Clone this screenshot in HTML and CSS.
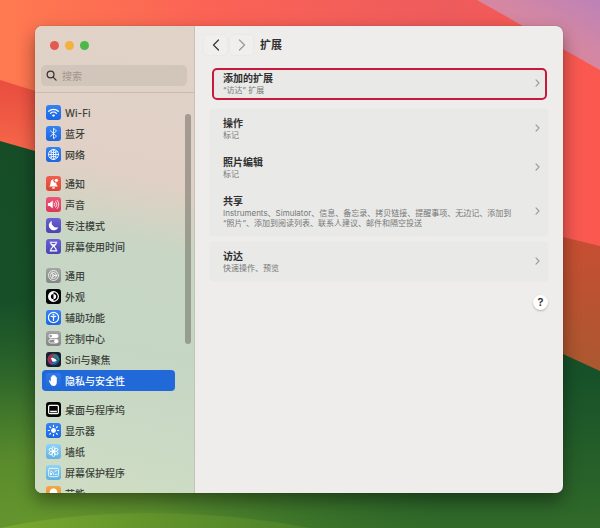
FILE: index.html
```html
<!DOCTYPE html>
<html lang="zh-CN">
<head>
<meta charset="utf-8">
<meta name="viewport" content="width=device-width, initial-scale=1">
<title>扩展</title>
<link rel="stylesheet" href="styles.css">
</head>
<body>
<svg class="wallpaper" viewBox="0 0 600 528" preserveAspectRatio="none" aria-hidden="true">
  <defs>
    <linearGradient id="sky" x1="0" y1="0" x2="1" y2="0"><stop offset="0" stop-color="#ff7a50"/><stop offset=".35" stop-color="#fa6355"/><stop offset=".75" stop-color="#ee5b5c"/><stop offset="1" stop-color="#fb584f"/></linearGradient>
    <linearGradient id="lilac" x1="0" y1="1" x2="1" y2="0"><stop offset="0" stop-color="#dc8599"/><stop offset=".6" stop-color="#d487a3"/><stop offset="1" stop-color="#bd82b8"/></linearGradient>
    <linearGradient id="leftBand" x1="0" y1="0" x2="0" y2="1"><stop offset="0" stop-color="#e94d3f"/><stop offset="1" stop-color="#fb704e"/></linearGradient>
    <linearGradient id="rightBand" x1="0" y1="0" x2="0" y2="1"><stop offset="0" stop-color="#cc4c33"/><stop offset="1" stop-color="#a9592f"/></linearGradient>
    <linearGradient id="leaf" x1="0" y1="0" x2="0" y2="1"><stop offset="0" stop-color="#164d27"/><stop offset=".6" stop-color="#175129"/><stop offset="1" stop-color="#316a29"/></linearGradient>
    <radialGradient id="glow" gradientUnits="userSpaceOnUse" cx="0" cy="0" r="1" gradientTransform="translate(40 528) scale(400 230)"><stop offset="0" stop-color="#65962d"/><stop offset=".3" stop-color="#5f902d" stop-opacity=".9"/><stop offset="1" stop-color="#3f782a" stop-opacity="0"/></radialGradient>
    <linearGradient id="hill" x1="0" y1="0" x2="1" y2="0"><stop offset="0" stop-color="#79a82f"/><stop offset="1" stop-color="#4c8029"/></linearGradient>
  </defs>
  <rect width="600" height="528" fill="url(#sky)"/>
  <path d="M477 0H600V70L563 49Q520 24 477 0Z" fill="url(#lilac)"/>
  <path d="M0 80L100 111V180L0 141Z" fill="url(#leftBand)"/>
  <path d="M480 215L563 237L600 246V380L480 330Z" fill="url(#rightBand)"/>
  <path d="M0 141L35 151L300 230L563 354L600 371V528H0Z" fill="url(#leaf)"/>
  <path d="M0 141L35 151L300 230L563 354L600 371V528H0Z" fill="url(#glow)"/>
  <path d="M0 528Q70 513 150 513T310 528Z" fill="url(#hill)"/>
</svg>

<main class="window">
  <aside class="sidebar">
    <div class="sidebar-top">
      <div class="lights">
        <button class="light close" aria-label="关闭"></button>
        <button class="light minimize" aria-label="最小化"></button>
        <button class="light zoom" aria-label="缩放"></button>
      </div>
      <label class="search">
        <svg viewBox="0 0 12 12" aria-hidden="true"><circle cx="5" cy="5" r="3.7"/><path d="M7.8 7.8L11 11"/></svg>
        <input type="search" placeholder="搜索" aria-label="搜索">
      </label>
    </div>
    <nav class="nav">
      <div class="group">
        <a href="#"><svg class="icon blue" viewBox="0 0 20 20"><g class="line thick"><path d="M3.6 8.4a9.2 9.2 0 0 1 12.8 0M6 11.2a5.8 5.8 0 0 1 8 0"/></g><path d="M10 16l-2.2-2.4a3.2 3.2 0 0 1 4.4 0z"/></svg>Wi-Fi</a>
        <a href="#"><svg class="icon blue" viewBox="0 0 20 20"><path class="line" d="M6 6.5l8 7L10 17V3l4 3.5-8 7"/></svg>蓝牙</a>
        <a href="#"><svg class="icon blue" viewBox="0 0 20 20"><g class="line"><circle cx="10" cy="10" r="6.7"/><ellipse cx="10" cy="10" rx="3.2" ry="6.7"/><path d="M3.3 10h13.4M10 3.3v13.4M4.7 6.3q5.3 3 10.6 0M4.7 13.7q5.3-3 10.6 0"/></g></svg>网络</a>
      </div>
      <div class="group">
        <a href="#"><svg class="icon red" viewBox="0 0 20 20"><path d="M4 14c2-1.700 1.800-3.200 2.100-5.500C6.400 6 8 4.300 10.200 4.200a3 3 0 0 0 3.400 4.600c.3 2.400.4 3.700 2.400 5.200zM8 15h4a2 2 0 0 1-4 0z"/><circle cx="13.800" cy="5.800" r="2.200"/></svg>通知</a>
        <a href="#"><svg class="icon pink" viewBox="0 0 20 20"><path d="M2.500 8h2.600L9 4.700v10.600L5.100 12H2.500z"/><g class="line"><path d="M11 8a3 3 0 0 1 0 4M13 6.300a5.500 5.500 0 0 1 0 7.400M15 4.600a8 8 0 0 1 0 10.800"/></g></svg>声音</a>
        <a href="#"><svg class="icon violet" viewBox="0 0 20 20"><path d="M8 3.600a6.600 6.600 0 1 0 8.500 8.700A6.700 6.700 0 0 1 8 3.600z"/></svg>专注模式</a>
        <a href="#"><svg class="icon violet" viewBox="0 0 20 20"><path d="M5 3.500h10v1.600H5zM5 15h10v1.600H5z"/><path class="line thick" d="M6.600 5v1.500L9.400 10l-2.800 3.500V15M13.400 5v1.500L10.600 10l2.800 3.500V15"/><path d="M7.500 7h5L10 10z"/></svg>屏幕使用时间</a>
      </div>
      <div class="group">
        <a href="#"><svg class="icon gray" viewBox="0 0 20 20"><g class="line"><circle cx="10" cy="10" r="6.600"/><circle cx="10" cy="10" r="4"/><circle cx="10" cy="10" r="1.200"/><path d="M11.200 10H14M9.400 9L8 6.500M9.400 11L8 13.500"/></g></svg>通用</a>
        <a href="#"><svg class="icon black" viewBox="0 0 20 20"><circle class="line thick" cx="10" cy="10" r="6.500"/><path d="M10 3.500a6.500 6.500 0 0 0 0 13v-3a3.500 3.500 0 0 1 0-7zM10 6.500a3.500 3.500 0 0 1 0 7z"/></svg>外观</a>
        <a href="#"><svg class="icon blue" viewBox="0 0 20 20"><circle class="line thick" cx="10" cy="10" r="6.800"/><circle cx="10" cy="6.300" r="1.400"/><path class="line thick" d="M7 8.500l3 .5 3-.5M10 9v5"/></svg>辅助功能</a>
        <a href="#"><svg class="icon gray" viewBox="0 0 20 20"><rect x="3.300" y="4" width="13.400" height="5.400" rx="2.700"/><circle cx="6.200" cy="6.700" r="1.700" fill="#939795"/><rect class="line" x="3.800" y="11" width="12.400" height="5" rx="2.500"/><circle cx="13.500" cy="13.500" r="2.500"/></svg>控制中心</a>
        <a href="#"><svg class="icon siri" viewBox="0 0 20 20"><circle cx="10" cy="10" r="8" fill="#274b78"/><path d="M2.500 8a8 8 0 0 1 12-4.500Q7 7 7.500 17A8 8 0 0 1 2.500 8z" fill="#a52d58"/><path d="M11 3a7 7 0 0 1 6.500 9Q13 7 7 7z" fill="#2b7f7c"/><path d="M6 15q5-1 10-4a7 7 0 0 1-10 4z" fill="#3378d2"/><path d="M6.500 8q4-1.500 8 3-3 3-6 1.500z"/></svg>Siri与聚焦</a>
        <a href="#" class="selected" aria-current="page"><svg class="icon blue" viewBox="0 0 20 20"><path d="M7 16.200C5.500 14.500 4.600 12 3.800 10c.7-.9 1.500-.3 2.600 1.400V5.300c0-1 1.400-1 1.500 0V3.800c.1-1 1.500-1 1.600 0v-.5c.1-1 1.600-1 1.700 0V4c.2-.9 1.600-.8 1.700.3v1.500c.3-.8 1.500-.6 1.500.4v6.100c0 2.800-1.500 4.900-4.200 4.900-1.300 0-2.400-.3-3.200-1z"/></svg>隐私与安全性</a>
      </div>
      <div class="group">
        <a href="#"><svg class="icon black" viewBox="0 0 20 20"><rect class="line thick" x="3.500" y="4.500" width="13" height="11" rx="1.500"/><path d="M5.500 11.500h9v2.300h-9z"/></svg>桌面与程序坞</a>
        <a href="#"><svg class="icon blue" viewBox="0 0 20 20"><circle cx="10" cy="10" r="3.200"/><path class="line thick" d="M10 3v1.500M10 15.500V17M3 10h1.500M15.500 10H17M5 5l1.100 1.100M13.900 13.900L15 15M5 15l1.100-1.100M13.900 6.100L15 5"/></svg>显示器</a>
        <a href="#"><svg class="icon sky" viewBox="0 0 20 20"><g class="line"><ellipse cx="10" cy="6.300" rx="2" ry="3"/><ellipse cx="10" cy="13.700" rx="2" ry="3"/><g transform="rotate(60 10 10)"><ellipse cx="10" cy="6.300" rx="2" ry="3"/><ellipse cx="10" cy="13.700" rx="2" ry="3"/></g><g transform="rotate(120 10 10)"><ellipse cx="10" cy="6.300" rx="2" ry="3"/><ellipse cx="10" cy="13.700" rx="2" ry="3"/></g></g><circle cx="10" cy="10" r="1.800"/></svg>墙纸</a>
        <a href="#"><svg class="icon sky" viewBox="0 0 20 20"><rect class="line" x="3.500" y="4.500" width="13" height="11" rx="1.500"/><path class="line" d="M6 13v-2.500M6 8q4 0 4.500 5M12 8.500l2-1M12.500 12.500h2"/><circle cx="7" cy="12" r="1.300"/></svg>屏幕保护程序</a>
        <a href="#"><svg class="icon orange" viewBox="0 0 20 20"><path d="M10 3a5 5 0 0 1 3 9q-.8.700-.8 2H7.800q0-1.300-.8-2a5 5 0 0 1 3-9zM8 15h4v1.500H8z"/></svg>节能</a>
      </div>
    </nav>
    <div class="scrollbar"></div>
  </aside>

  <section class="content">
    <header class="toolbar">
      <button class="nav-button" aria-label="返回"><svg viewBox="0 0 8 12"><path d="M6.500 1L1.500 6l5 5"/></svg></button>
      <button class="nav-button forward" aria-label="前进"><svg viewBox="0 0 8 12"><path d="M1.500 1l5 5-5 5"/></svg></button>
      <h1>扩展</h1>
    </header>
    <div class="cards">
      <div class="card highlighted">
        <button class="row"><span class="text"><strong>添加的扩展</strong><small>“访达” 扩展</small></span><svg class="chevron" viewBox="0 0 5 8"><path d="M1 .8L4 4 1 7.200"/></svg></button>
      </div>
      <div class="card">
        <button class="row"><span class="text"><strong>操作</strong><small>标记</small></span><svg class="chevron" viewBox="0 0 5 8"><path d="M1 .8L4 4 1 7.200"/></svg></button>
        <button class="row"><span class="text"><strong>照片编辑</strong><small>标记</small></span><svg class="chevron" viewBox="0 0 5 8"><path d="M1 .8L4 4 1 7.200"/></svg></button>
        <button class="row"><span class="text"><strong>共享</strong><small>Instruments、Simulator、信息、备忘录、拷贝链接、提醒事项、无边记、添加到<br>“照片”、添加到阅读列表、联系人建议、邮件和隔空投送</small></span><svg class="chevron" viewBox="0 0 5 8"><path d="M1 .8L4 4 1 7.200"/></svg></button>
      </div>
      <div class="card">
        <button class="row"><span class="text"><strong>访达</strong><small>快速操作、预览</small></span><svg class="chevron" viewBox="0 0 5 8"><path d="M1 .8L4 4 1 7.200"/></svg></button>
      </div>
    </div>
    <button class="help" aria-label="帮助">?</button>
  </section>
</main>
</body>
</html>
```
FILE: styles.css
```css
* {
  box-sizing: border-box;
}

body {
  margin: 0;
  height: 100vh;
  padding: 26px 37px 35px 35px;
  overflow: hidden;
  background: #17512a;
  font-family: Inter, "Noto Sans CJK SC", sans-serif;
  font-size: 10px;
  color: #303030;
}

button {
  margin: 0;
  padding: 0;
  border: 0;
  background: none;
  font: inherit;
  color: inherit;
}

.wallpaper {
  position: absolute;
  inset: 0;
  width: 100%;
  height: 100%;
}

.window {
  position: relative;
  display: grid;
  grid-template-columns: 160px 1fr;
  height: 100%;
  border-radius: 7px;
  overflow: hidden;
  background: #eeedec;
  box-shadow: 0 0 1px rgba(0, 0, 0, 0.4), 0 8px 18px rgba(0, 0, 0, 0.4);
}

/* Sidebar */

.sidebar {
  position: relative;
  display: flex;
  flex-direction: column;
  min-height: 0;
  overflow: hidden;
  border-right: 1px solid #c6c3b6;
  background: linear-gradient(192deg, #e0d3c8 0%, #e1d0c5 32%, #d5d3c3 39%, #c7d6c5 47%, #c6d6c5 68%, #cfddc3 100%);
}

.sidebar-top {
  padding: 15px 7px 6px 6px;
  border-bottom: 1px solid #cbbcb2;
}

.lights {
  display: flex;
  gap: 6px;
  padding-left: 9px;
}

.light {
  width: 9px;
  height: 9px;
  border-radius: 50%;
}

.close { background: #e35a52; }
.minimize { background: #f3b13f; }
.zoom { background: #4cb848; }

.search {
  display: flex;
  align-items: center;
  gap: 5px;
  height: 21px;
  margin-top: 15px;
  padding: 0 5px;
  border-radius: 5px;
  background: #d2c5ba;
}

.search svg {
  flex: none;
  width: 11px;
  height: 11px;
  fill: none;
  stroke: #3b3530;
  stroke-width: 1.4;
  stroke-linecap: round;
}

.search input {
  width: 100%;
  min-width: 0;
  padding: 0;
  border: 0;
  outline: 0;
  background: none;
  font: inherit;
}

.search input::placeholder {
  color: #a2968c;
}

.nav {
  flex: 1;
  min-height: 0;
  overflow: hidden;
  padding: 9px 19px 0 7px;
}

.group + .group {
  margin-top: 8px;
}

.group a {
  display: flex;
  align-items: center;
  gap: 4px;
  height: 21px;
  padding-left: 4px;
  border-radius: 4px;
  color: #3c433c;
  font-weight: 500;
  text-decoration: none;
}

.group a.selected {
  background: #2169d9;
  color: #fff;
}

.icon {
  flex: none;
  width: 15px;
  height: 15px;
  border-radius: 3px;
  fill: #fff;
}

.icon .line {
  fill: none;
  stroke: #fff;
  stroke-width: 1.1;
  stroke-linecap: round;
  stroke-linejoin: round;
}

.icon .thick {
  stroke-width: 1.6;
}

.blue { background: linear-gradient(#3582f3, #1b66e2); }
.red { background: linear-gradient(#f0604f, #db4434); }
.pink { background: linear-gradient(#f0557a, #db3759); }
.violet { background: linear-gradient(#6a62d4, #4b43b4); }
.gray { background: linear-gradient(#a3a6a3, #828684); }
.black { background: #050606; }
.siri { background: #15202c; }
.sky { background: linear-gradient(#91d3f5, #5fb1e3); }
.orange { background: linear-gradient(#f3a64b, #e98b26); }

.selected .blue {
  background: linear-gradient(#3179ea, #2169d9);
}

.scrollbar {
  position: absolute;
  top: 88px;
  right: 3px;
  width: 6px;
  height: 230px;
  border-radius: 3px;
  background: rgba(90, 90, 80, 0.45);
}

/* Content pane */

.content {
  display: flex;
  flex-direction: column;
  min-width: 0;
  padding: 9px 15px 15px;
}

.toolbar {
  display: flex;
  align-items: center;
  gap: 3px;
  height: 20px;
  margin-left: -6px;
}

.nav-button {
  display: grid;
  place-items: center;
  width: 23px;
  height: 20px;
  border-radius: 4px;
  background: #f0efee;
  box-shadow: 0 0 1px 1px #e9e8e7;
}

.nav-button svg {
  width: 8px;
  height: 12px;
  fill: none;
  stroke: #3a3a3a;
  stroke-width: 1.3;
  stroke-linecap: round;
  stroke-linejoin: round;
}

.nav-button.forward svg {
  stroke: #9b9b9b;
}

.toolbar h1 {
  margin: 0 0 0 4px;
  font-size: 11px;
  line-height: 20px;
  font-weight: 700;
}

.cards {
  display: grid;
  gap: 6px;
  margin-top: 13px;
}

.card {
  border-radius: 4px;
  background: #e9e9e8;
  box-shadow: 0 0 1px #dededd;
}

.card.highlighted {
  margin: 0 1px 3px 2px;
  border: 2px solid #c8193c;
  border-radius: 5px;
  box-shadow: none;
}

.row {
  display: flex;
  align-items: center;
  justify-content: space-between;
  gap: 12px;
  width: 100%;
  padding: 7px 8px 8px 13px;
  text-align: left;
}

.highlighted .row {
  padding: 1px 5px 3px 9px;
}

.text {
  display: grid;
  min-width: 0;
}

.text strong {
  font-size: 10px;
  line-height: 14px;
  font-weight: 600;
}

.text small {
  font-size: 8px;
  line-height: 10px;
  color: #777;
}

.chevron {
  flex: none;
  width: 5px;
  height: 8px;
  fill: none;
  stroke: #999;
  stroke-width: 1.1;
  stroke-linecap: round;
  stroke-linejoin: round;
}

.help {
  align-self: flex-end;
  width: 15px;
  height: 15px;
  margin-top: 14px;
  border-radius: 50%;
  background: #fff;
  box-shadow: 0 1px 2px rgba(0, 0, 0, 0.25);
  font-size: 11px;
  line-height: 15px;
  font-weight: 600;
  text-align: center;
}
```
